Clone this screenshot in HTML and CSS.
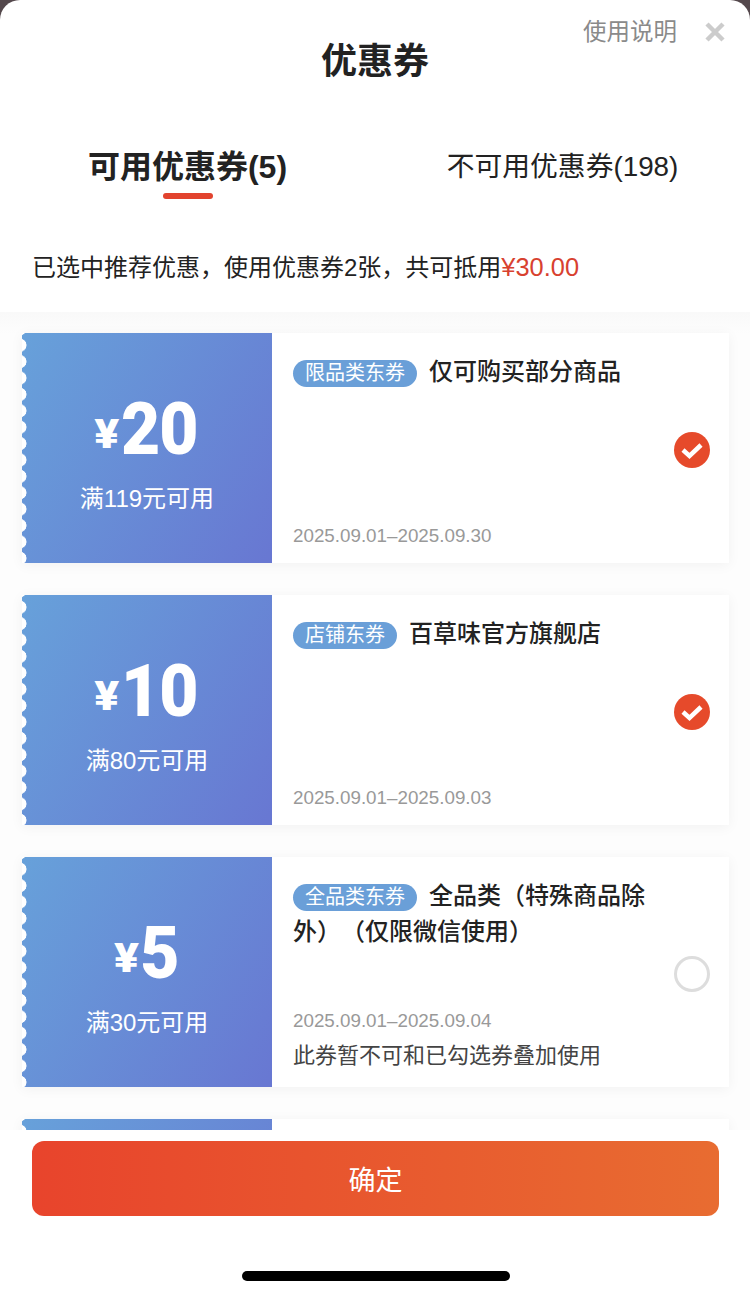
FILE: index.html
```html
<!DOCTYPE html>
<html lang="zh-CN">
<head>
<meta charset="utf-8">
<title>优惠券</title>
<link rel="stylesheet" href="styles.css">
</head>
<body>
<div class="sheet">
  <header class="head">
    <h1 class="title">优惠券</h1>
    <a class="help">使用说明</a>
    <svg class="close" width="20" height="20" viewBox="0 0 20 20"><path d="M2 2 18 18M18 2 2 18"/></svg>
  </header>
  <nav class="tabs">
    <div class="tab tab-on">可用优惠券(5)</div>
    <div class="tab">不可用优惠券(198)</div>
  </nav>
  <p class="note">已选中推荐优惠，使用优惠券2张，共可抵用<span class="note-sum">¥30.00</span></p>
  <main class="list">
    <article class="coupon">
      <div class="stub">
        <div class="amount"><span class="yen">¥</span><span class="num">20</span></div>
        <div class="cond">满119元可用</div>
      </div>
      <div class="body">
        <div class="info">
          <div class="name"><span class="tag">限品类东券</span>仅可购买部分商品</div>
          <div class="foot"><div class="date">2025.09.01–2025.09.30</div></div>
        </div>
        <svg class="check" width="36" height="36" viewBox="0 0 36 36"><circle class="check-disc" cx="18" cy="18" r="18"/><path class="check-mark" d="M9 18l6.5 6L27 13"/></svg>
      </div>
    </article>
    <article class="coupon">
      <div class="stub">
        <div class="amount"><span class="yen">¥</span><span class="num">10</span></div>
        <div class="cond">满80元可用</div>
      </div>
      <div class="body">
        <div class="info">
          <div class="name"><span class="tag">店铺东券</span>百草味官方旗舰店</div>
          <div class="foot"><div class="date">2025.09.01–2025.09.03</div></div>
        </div>
        <svg class="check" width="36" height="36" viewBox="0 0 36 36"><circle class="check-disc" cx="18" cy="18" r="18"/><path class="check-mark" d="M9 18l6.5 6L27 13"/></svg>
      </div>
    </article>
    <article class="coupon">
      <div class="stub">
        <div class="amount"><span class="yen">¥</span><span class="num">5</span></div>
        <div class="cond">满30元可用</div>
      </div>
      <div class="body">
        <div class="info">
          <div class="name"><span class="tag">全品类东券</span>全品类（特殊商品除外）（仅限微信使用）</div>
          <div class="foot">
            <div class="date">2025.09.01–2025.09.04</div>
            <div class="warn">此券暂不可和已勾选券叠加使用</div>
          </div>
        </div>
        <svg class="check" width="36" height="36" viewBox="0 0 36 36"><circle class="check-ring" cx="18" cy="18" r="16.5"/></svg>
      </div>
    </article>
    <article class="coupon">
      <div class="stub"></div>
      <div class="body"></div>
    </article>
  </main>
  <footer class="bottom">
    <button class="ok">确定</button>
    <div class="home"></div>
  </footer>
</div>
</body>
</html>
```

FILE: styles.css
```css
* { box-sizing: border-box; }
html, body { margin: 0; height: 100%; }
body {
  background: #54484c;
  font-family: "Liberation Sans", "Noto Sans CJK SC", sans-serif;
  color: #222;
  overflow: hidden;
}
.sheet {
  height: 1296px;
  background: #fff;
  border-radius: 20px 20px 0 0;
  display: flex;
  flex-direction: column;
  overflow: hidden;
}
.head {
  position: relative;
  height: 126px;
  padding-top: 38px;
  text-align: center;
}
.title {
  margin: 0;
  font-size: 36px;
  line-height: 48px;
  font-weight: 700;
  color: #222;
}
.help {
  position: absolute;
  right: 73px;
  top: 16px;
  font-size: 23.5px;
  line-height: 32px;
  color: #8a8a8a;
}
.close {
  position: absolute;
  right: 25px;
  top: 22px;
}
.close path { fill: none; stroke: #ccc; stroke-width: 4.5; }
.tabs {
  display: grid;
  grid-template-columns: 1fr 1fr;
  height: 74px;
}
.tab {
  position: relative;
  text-align: center;
  font-size: 27.8px;
  line-height: 40px;
  padding-top: 21px;
  color: #222;
}
.tab-on { font-size: 32px; font-weight: 700; }
.tab-on::after {
  content: "";
  position: absolute;
  left: 163px;
  top: 67px;
  width: 50px;
  height: 6px;
  border-radius: 3px;
  background: #e2432e;
}
.note {
  margin: 0;
  height: 112px;
  padding: 50px 0 0 32px;
  font-size: 24px;
  line-height: 34px;
  color: #222;
}
.note-sum { color: #d8412f; font-size: 25.4px; }
.list {
  flex: 1;
  min-height: 0;
  overflow: hidden;
  background: linear-gradient(#f9f9f9, #fdfdfd 22px);
  padding: 21px 21px 0 22px;
  display: flex;
  flex-direction: column;
  gap: 32px;
}
.coupon {
  flex: none;
  display: flex;
  height: 230px;
  box-shadow: 0 2px 12px rgba(0, 0, 0, .05);
}
.stub {
  position: relative;
  flex: none;
  width: 250px;
  background: linear-gradient(120deg, #67a1da, #6877d2);
  color: #fff;
  text-align: center;
  padding-top: 57px;
}
.stub::before {
  content: "";
  position: absolute;
  left: 0;
  top: 0;
  bottom: 0;
  width: 6px;
  background: radial-gradient(circle at -2px 50%, #fff 6.2px, transparent 6.8px) 0 4px / 6px 16.4px repeat-y;
}
.amount {
  height: 80px;
  line-height: 80px;
  font-family: Roboto, "Liberation Sans", sans-serif;
  font-weight: 900;
  transform: scaleX(.94);
}
.yen {
  display: inline-block;
  font-size: 41px;
  margin-right: 4px;
  vertical-align: 6px;
  transform: scaleX(1.2);
}
.num { font-size: 72px; letter-spacing: -1px; }
.cond {
  margin-top: 13px;
  font-size: 24px;
  line-height: 32px;
}
.body {
  flex: 1;
  display: flex;
  align-items: center;
  padding: 0 19px 0 21px;
  background: #fff;
}
.info {
  flex: 1;
  align-self: stretch;
  display: flex;
  flex-direction: column;
  padding: 21px 0 13px;
  min-width: 0;
}
.name {
  width: 360px;
  font-size: 24px;
  line-height: 36px;
  font-weight: 500;
  color: #222;
  text-spacing-trim: space-all;
}
.tag {
  display: inline-block;
  margin-right: 12px;
  padding: 0 12px;
  height: 27px;
  line-height: 27px;
  border-radius: 14px;
  background: #6a9fd8;
  color: #fff;
  font-size: 20px;
  font-weight: 400;
  vertical-align: 0;
}
.foot { margin-top: auto; }
.date {
  font-size: 18.8px;
  line-height: 28px;
  color: #999;
}
.warn {
  margin: 6px 0 3px;
  font-size: 22px;
  line-height: 30px;
  color: #444;
}
.check { flex: none; margin-top: 3px; }
.check-disc { fill: #e64a2b; }
.check-mark { fill: none; stroke: #fff; stroke-width: 4.5; }
.check-ring { fill: none; stroke: #ddd; stroke-width: 3; }
.bottom {
  position: relative;
  flex: none;
  height: 166px;
  padding: 11px 31px 0 32px;
  background: #fff;
}
.ok {
  display: block;
  width: 100%;
  height: 75px;
  border: 0;
  padding-bottom: 2px;
  border-radius: 12px;
  background: linear-gradient(90deg, #e8442c, #e86c31);
  color: #fff;
  font: inherit;
  font-size: 27px;
}
.home {
  width: 268px;
  height: 10px;
  margin: 55px 0 0 210px;
  border-radius: 5px;
  background: #000;
}
```
